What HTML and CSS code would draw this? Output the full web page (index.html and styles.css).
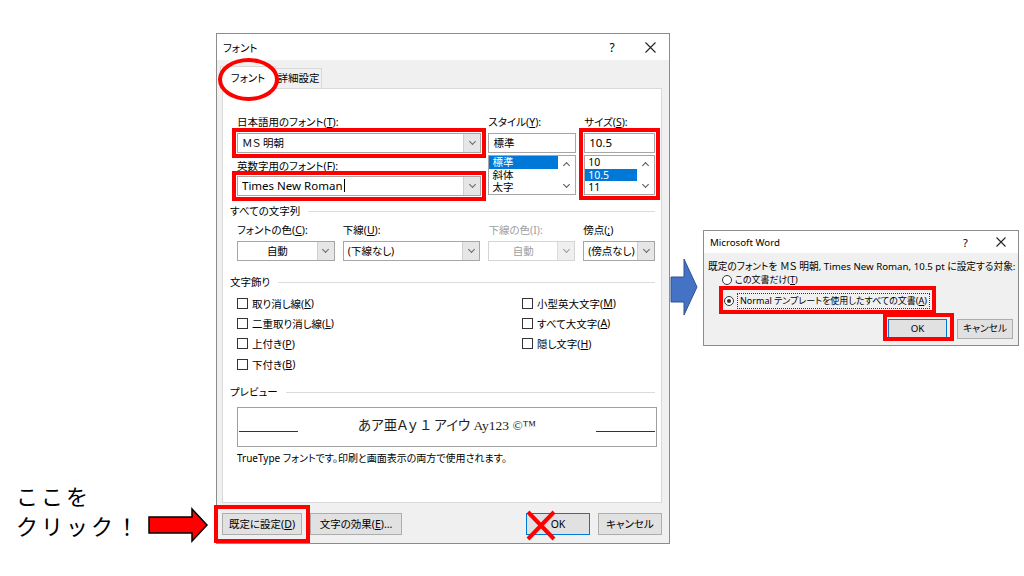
FILE: index.html
```html
<!DOCTYPE html>
<html lang="ja">
  <head>
    <meta charset="UTF-8" />
    <title>フォント</title>
    <link rel="stylesheet" href="styles.css">
  </head>
  <body>
    <div class="canvas">
      <div class="font-dlg">
        <div class="titlebar">
          <span class="title">フォント</span>
          <span class="tb-btn">?</span>
          <span class="tb-btn">
            <svg width="11" height="11" viewBox="0 0 11 11"><path d="M0.5 0.5L10.5 10.5M10.5 0.5L0.5 10.5" stroke="#222" stroke-width="1.1" /></svg>
          </span>
        </div>
        <div class="tabs">
          <div class="tab active">フォント</div>
          <div class="tab other">詳細設定</div>
        </div>
        <div class="panel">
          <div class="top-grid">
            <div class="col col1">
              <div class="lbl">日本語用のフォント(<u>T</u>):</div>
              <div class="combo hl"><span class="val">ＭＳ 明朝</span><span class="dd"><i class="chev"></i></span></div>
              <div class="lbl lbl2">英数字用のフォント(<u>F</u>):</div>
              <div class="combo hl"><span class="val lat">Times New Roman<span class="caret"></span></span><span class="dd"><i class="chev"></i></span></div>
            </div>
            <div class="col col2">
              <div class="lbl">スタイル(<u>Y</u>):</div>
              <div class="field">標準</div>
              <div class="list">
                <div class="items">
                  <div class="sel">標準</div>
                  <div>斜体</div>
                  <div>太字</div>
                </div>
                <div class="sbar"><i class="sc up"></i><i class="sc down"></i></div>
              </div>
            </div>
            <div class="col col3">
              <div class="lbl">サイズ(<u>S</u>):</div>
              <div class="hl">
                <div class="field lat">10.5</div>
                <div class="list">
                  <div class="items">
                    <div>10</div>
                    <div class="sel">10.5</div>
                    <div>11</div>
                  </div>
                  <div class="sbar"><i class="sc up"></i><i class="sc down"></i></div>
                </div>
              </div>
            </div>
          </div>

          <div class="group">すべての文字列</div>
          <div class="row2">
            <div class="fld f-color">
              <div class="lbl">フォントの色(<u>C</u>):</div>
              <div class="combo center"><span class="val">自動</span><span class="dd"><i class="chev"></i></span></div>
            </div>
            <div class="fld f-under">
              <div class="lbl">下線(<u>U</u>):</div>
              <div class="combo"><span class="val">(下線なし)</span><span class="dd"><i class="chev"></i></span></div>
            </div>
            <div class="fld f-ucolor dis">
              <div class="lbl">下線の色(I):</div>
              <div class="combo center"><span class="val">自動</span><span class="dd"><i class="chev"></i></span></div>
            </div>
            <div class="fld f-emph">
              <div class="lbl">傍点(<u>;</u>)</div>
              <div class="combo"><span class="val">(傍点なし)</span><span class="dd"><i class="chev"></i></span></div>
            </div>
          </div>

          <div class="group g-deco">文字飾り</div>
          <div class="checks">
            <div class="ck-col ck-left">
              <div class="ck"><span class="box"></span>取り消し線(<u>K</u>)</div>
              <div class="ck"><span class="box"></span>二重取り消し線(<u>L</u>)</div>
              <div class="ck"><span class="box"></span>上付き(<u>P</u>)</div>
              <div class="ck"><span class="box"></span>下付き(<u>B</u>)</div>
            </div>
            <div class="ck-col">
              <div class="ck"><span class="box"></span>小型英大文字(<u>M</u>)</div>
              <div class="ck"><span class="box"></span>すべて大文字(<u>A</u>)</div>
              <div class="ck"><span class="box"></span>隠し文字(<u>H</u>)</div>
            </div>
          </div>

          <div class="group g-prev">プレビュー</div>
          <div class="preview">
            <span class="pv-line"></span>
            <span class="pv-text">あア亜Ａｙ １ アイウ Ay123 ©™</span>
            <span class="pv-line"></span>
          </div>
          <div class="desc">TrueType フォントです。印刷と画面表示の両方で使用されます。</div>
        </div>

        <div class="btn-row">
          <div class="btn btn-set">既定に設定(<u>D</u>)</div>
          <div class="btn btn-fx">文字の効果(<u>E</u>)...</div>
          <div class="spacer"></div>
          <div class="btn btn-ok">OK
            <svg class="cross" width="32" height="33" viewBox="0 0 32 33"><path d="M3 3L29 30M29 3L3 30" stroke="#f00" stroke-width="4" /></svg>
          </div>
          <div class="btn btn-cancel">キャンセル</div>
        </div>
      </div>

      <svg class="blue-arrow" width="32" height="60" viewBox="0 0 32 60">
        <polygon points="2,20 15,20 15,2 28,30 15,58 15,45 2,45" fill="#4472c4" stroke="#2f528f" stroke-width="1" />
      </svg>

      <div class="word-dlg">
        <div class="w-title">
          <span class="title">Microsoft Word</span>
          <span class="tb-btn">?</span>
          <span class="tb-btn">
            <svg width="10" height="10" viewBox="0 0 10 10"><path d="M0.5 0.5L9.5 9.5M9.5 0.5L0.5 9.5" stroke="#222" stroke-width="1.1" /></svg>
          </span>
        </div>
        <div class="w-body">
          <div class="w-msg">既定のフォントを ＭＳ 明朝, Times New Roman, 10.5 pt に設定する対象:</div>
          <div class="radio-row r1"><span class="radio"></span>この文書だけ(<u>T</u>)</div>
          <div class="radio-row r2"><span class="radio on"></span><span class="focus">Normal テンプレートを使用したすべての文書(<u>A</u>)</span></div>
          <div class="w-btns">
            <div class="btn w-ok">OK</div>
            <div class="btn w-cancel">キャンセル</div>
          </div>
        </div>
      </div>

      <div class="note">ここを<br>クリック！</div>

      <svg class="red-arrow" width="62" height="36" viewBox="0 0 62 36">
        <polygon points="2,10 45,10 45,2 60,18 45,34 45,26 2,26" fill="#f00" stroke="#000" stroke-width="1.5" />
      </svg>
    </div>
  </body>
</html>
```

FILE: styles.css
```css
body {
  margin: 0;
  background-color: #fff;
  color: #000;
  font-family: "Noto Sans", "Noto Sans CJK JP", sans-serif;
}

.canvas {
  position: relative;
  width: 1024px;
  height: 576px;
  overflow: hidden;
}

u {
  text-decoration-thickness: 1px;
  text-underline-offset: 1px;
}

/* font dialog */

.font-dlg {
  position: absolute;
  left: 216px;
  top: 33px;
  width: 452px;
  height: 509px;
  border: 1px solid #8c8c8c;
  background-color: #f0f0f0;
  font-size: 10.5px;
  font-feature-settings: "palt";
}

.titlebar {
  display: flex;
  align-items: center;
  height: 26px;
  background-color: #fff;
}

.title {
  flex: 1;
  padding-left: 6px;
}

.tb-btn {
  width: 38px;
  display: flex;
  justify-content: center;
  font-size: 12px;
}

.tabs {
  display: flex;
  align-items: flex-end;
  height: 28px;
  padding-left: 3px;
}

.tab {
  box-sizing: border-box;
  height: 20px;
  line-height: 19px;
  text-align: center;
  border: 1px solid #d9d9d9;
  border-bottom: none;
}

.tab.active {
  position: relative;
  z-index: 1;
  width: 56px;
  height: 23px;
  line-height: 22px;
  margin-bottom: -1px;
  background-color: #fff;
}

.tab.active::after {
  content: "";
  position: absolute;
  left: -3px;
  top: -9px;
  width: 61px;
  height: 43px;
  box-sizing: border-box;
  border: 4px solid #f00;
  border-radius: 50%;
}

.tab.other {
  width: 46px;
  border-left: none;
}

.panel {
  box-sizing: border-box;
  width: 440px;
  height: 415px;
  margin-left: 5px;
  padding: 26px 6px 0 7px;
  border: 1px solid #d9d9d9;
  background-color: #fff;
}

.top-grid {
  display: flex;
  margin-left: 7px;
}

.col1 {
  width: 245px;
  margin-right: 7px;
}

.col2 {
  width: 88px;
  margin-right: 8px;
}

.col3 {
  width: 71px;
}

.lbl {
  height: 15px;
  line-height: 15px;
  margin-bottom: 3px;
  white-space: nowrap;
}

.lbl2 {
  margin-top: 6px;
  margin-bottom: 2px;
}

.hl {
  outline: 4px solid #f00;
  outline-offset: 1px;
}

.combo,
.field {
  display: flex;
  box-sizing: border-box;
  height: 20px;
  border: 1px solid #a6a6a6;
  background-color: #fff;
}

.field {
  padding-left: 4px;
  line-height: 18px;
}

.combo .val {
  flex: 1;
  padding-left: 4px;
  line-height: 18px;
  white-space: nowrap;
}

.combo.center .val {
  padding-left: 0;
  text-align: center;
}

.lat {
  font-size: 11.5px;
}

.caret {
  display: inline-block;
  width: 1px;
  height: 13px;
  margin-left: 1px;
  vertical-align: -2px;
  background-color: #000;
}

.dd {
  width: 16px;
  display: flex;
  align-items: center;
  justify-content: center;
  background-color: #e6e6e6;
  border-left: 1px solid #cfcfcf;
}

.chev {
  width: 4px;
  height: 4px;
  margin-top: -3px;
  border-right: 1px solid #666;
  border-bottom: 1px solid #666;
  transform: rotate(45deg);
}

.list {
  display: flex;
  box-sizing: border-box;
  height: 40px;
  margin-top: 2px;
  border: 1px solid #a6a6a6;
  background-color: #fff;
}

.items {
  flex: 1;
}

.items div {
  height: 12.5px;
  line-height: 12.5px;
  padding-left: 3px;
}

.items .sel {
  background-color: #0078d7;
  color: #fff;
}

.sbar {
  width: 17px;
  display: flex;
  flex-direction: column;
  align-items: center;
  justify-content: space-between;
  padding: 6px 0 5px;
  box-sizing: border-box;
}

.sc {
  width: 4px;
  height: 4px;
  border-right: 1.5px solid #555;
  border-bottom: 1.5px solid #555;
}

.sc.up {
  margin-top: 1px;
  transform: rotate(-135deg);
}

.sc.down {
  margin-bottom: 2px;
  transform: rotate(45deg);
}

.group {
  display: flex;
  align-items: center;
  height: 15px;
  line-height: 15px;
  margin-top: 8px;
}

.group::after {
  content: "";
  flex: 1;
  margin-left: 8px;
  border-top: 1px solid #dcdcdc;
}

.row2 {
  display: flex;
  margin-left: 7px;
  margin-top: 4px;
}

.fld {
  margin-right: 8px;
}

.f-color {
  width: 98px;
}

.f-under {
  width: 138px;
}

.f-ucolor {
  width: 87px;
}

.f-emph {
  width: 72px;
  margin-right: 0;
}

.dis {
  color: #a0a0a0;
}

.dis .combo {
  border-color: #d4d4d4;
}

.dis .dd {
  background-color: #efefef;
  border-left-color: #dcdcdc;
}

.dis .chev {
  border-color: #999;
}

.g-deco {
  margin-top: 14px;
}

.checks {
  display: flex;
  margin-left: 7px;
  margin-top: 3px;
}

.ck-col {
  display: flex;
  flex-direction: column;
}

.ck-left {
  width: 285px;
  flex-shrink: 0;
}

.ck {
  display: flex;
  align-items: center;
  height: 20.3px;
  white-space: nowrap;
}

.box {
  width: 11px;
  height: 11px;
  box-sizing: border-box;
  margin-right: 4px;
  border: 1px solid #333;
  background-color: #fff;
}

.g-prev {
  margin-top: 11px;
}

.preview {
  display: flex;
  box-sizing: border-box;
  width: 420px;
  height: 40px;
  margin-left: 7px;
  margin-top: 7px;
  padding: 0 1px;
  border: 1px solid #a0a0a0;
}

.pv-line {
  width: 59px;
  height: 0;
  margin-top: 23px;
  border-top: 1px solid #333;
}

.pv-text {
  flex: 1;
  text-align: center;
  line-height: 36px;
  font-family: "Liberation Serif", "Noto Sans CJK JP", serif;
  font-size: 13.5px;
  color: #222;
}

.desc {
  margin-left: 7px;
  margin-top: 4px;
  line-height: 15px;
  font-size: 10px;
  white-space: nowrap;
}

.btn-row {
  display: flex;
  margin-top: 10px;
  padding: 0 7px 0 5px;
}

.spacer {
  flex: 1;
}

.btn {
  box-sizing: border-box;
  height: 22px;
  line-height: 20px;
  text-align: center;
  border: 1px solid #adadad;
  background-color: #e1e1e1;
  white-space: nowrap;
}

.btn-set {
  width: 80px;
  outline: 4px solid #f00;
  outline-offset: 4px;
}

.btn-fx {
  width: 92px;
  margin-left: 8px;
}

.btn-ok {
  position: relative;
  width: 64px;
  border-color: #0078d7;
}

.cross {
  position: absolute;
  left: -2px;
  top: -5px;
}

.btn-cancel {
  width: 64px;
  margin-left: 8px;
}

.blue-arrow {
  position: absolute;
  left: 669px;
  top: 257px;
}

/* word confirm dialog */

.word-dlg {
  position: absolute;
  left: 703px;
  top: 230px;
  width: 314px;
  height: 114px;
  border: 1px solid #8c8c8c;
  background-color: #f0f0f0;
  font-size: 9.7px;
  font-feature-settings: "palt";
}

.w-title {
  display: flex;
  align-items: center;
  height: 22px;
  background-color: #fff;
}

.w-title .tb-btn {
  width: 35px;
  font-size: 11px;
}

.w-body {
  padding: 7px 0 0 4px;
}

.w-msg {
  height: 13px;
  line-height: 13px;
  white-space: nowrap;
}

.radio-row {
  display: flex;
  align-items: center;
  white-space: nowrap;
  font-size: 9px;
}

.r1 {
  height: 13px;
  margin-left: 14px;
}

.r2 {
  position: relative;
  width: max-content;
  height: 17px;
  margin-top: 6px;
  margin-left: 16px;
}

.r2::after {
  content: "";
  position: absolute;
  left: -5px;
  top: -6px;
  right: -6px;
  bottom: -5px;
  border: 4px solid #f00;
}

.radio {
  position: relative;
  width: 10px;
  height: 10px;
  box-sizing: border-box;
  margin-right: 3px;
  border: 1px solid #333;
  border-radius: 50%;
  background-color: #fff;
}

.radio.on::after {
  content: "";
  position: absolute;
  left: 2px;
  top: 2px;
  width: 4px;
  height: 4px;
  border-radius: 50%;
  background-color: #333;
}

.focus {
  padding: 0 2px;
  line-height: 14px;
  border: 1px dotted #333;
}

.w-btns {
  display: flex;
  justify-content: flex-end;
  gap: 10px;
  margin-top: 10px;
  padding-right: 5px;
}

.w-btns .btn {
  height: 20px;
  line-height: 18px;
}

.w-ok {
  position: relative;
  width: 59px;
  border-color: #0078d7;
}

.w-ok::after {
  content: "";
  position: absolute;
  left: -6px;
  top: -7px;
  right: -8px;
  bottom: -3px;
  border: 4px solid #f00;
}

.w-cancel {
  width: 56px;
}

/* annotations */

.note {
  position: absolute;
  left: 16px;
  top: 480px;
  font-family: "Noto Sans CJK JP", sans-serif;
  font-size: 22px;
  line-height: 30px;
  letter-spacing: 3px;
}

.red-arrow {
  position: absolute;
  left: 147px;
  top: 507px;
}
```
